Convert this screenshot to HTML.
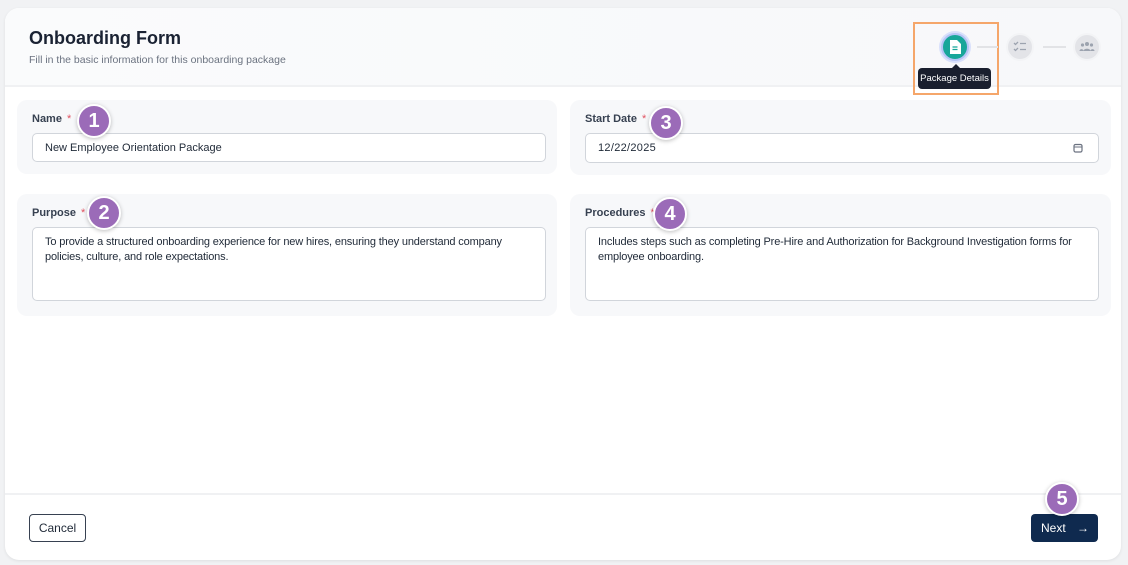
<!DOCTYPE html>
<html><head><style>
*{box-sizing:border-box;margin:0;padding:0}
body{width:1128px;height:565px;background:#f1f2f4;font-family:"Liberation Sans",sans-serif;position:relative;overflow:hidden;color:#1f2937}
.card{position:absolute;left:5px;top:8px;width:1116px;height:552px;background:#fff;border-radius:14px;box-shadow:0 1px 3px rgba(0,0,0,.08);overflow:hidden}
.hdr{position:absolute;left:0;top:0;width:100%;height:79px;background:linear-gradient(90deg,#fafbfc,#f7f8fa);border-bottom:2px solid #f0f1f3}
.a{position:absolute}
h1{position:absolute;left:24px;top:20px;font-size:18px;font-weight:bold;color:#1a2233}
.sub{left:24px;top:46px;font-size:10.5px;color:#6b7280}
.sec{position:absolute;background:#f7f8fa;border-radius:10px}
.lbl{position:absolute;font-size:11px;font-weight:bold;color:#374151}
.lbl span{color:#e05260;margin-left:5px;font-weight:normal}
.inp{position:absolute;background:#fff;border:1px solid #d1d5db;border-radius:5px;font-size:11px;color:#1f2937;padding:1px 12px 0;line-height:27px}
.ta{line-height:15px;padding:7px 12px;letter-spacing:-0.15px}
.badge{position:absolute;width:34px;height:34px;border-radius:50%;background:#9b6bb8;border:2px solid #fff;box-shadow:0 1px 4px rgba(0,0,0,.25);color:#fff;font-weight:bold;font-size:20px;text-align:center;line-height:30px}
.step{position:absolute;width:28px;height:28px;border-radius:50%;background:#e3e4e8;border:2px solid #f3f4f6}
.line{position:absolute;height:2px;background:#e2e3e6}
</style></head><body>
<div class="card">
<div class="hdr"></div>
<h1>Onboarding Form</h1>
<div class="a sub">Fill in the basic information for this onboarding package</div>
<div class="a" style="left:908px;top:14px;width:86px;height:73px;border:2px solid #f5a66a"></div>
<div class="step" style="left:936px;top:25px;background:#17a69a;border:2px solid #b6c5f5;box-shadow:0 0 0 2px #d9e0fb"></div>
<svg class="a" style="left:944px;top:32px" width="12" height="14" viewBox="0 0 12 14"><path d="M1 0h7l4 4v10H1z" fill="#fff"/><path d="M3.5 7h5M3.5 9.5h5" stroke="#17a69a" stroke-width="1.3"/></svg>
<div class="line" style="left:972px;width:21px;top:38px"></div>
<div class="step" style="left:1001px;top:25px"></div>
<svg class="a" style="left:1008px;top:33px" width="14" height="11" viewBox="0 0 14 11"><path d="M1 2l1.5 1.5L5 1M1 8l1.5 1.5L5 7M7 2.5h6M7 8.5h6" stroke="#9ca3af" stroke-width="1.3" fill="none"/></svg>
<div class="line" style="left:1038px;width:23px;top:38px"></div>
<div class="step" style="left:1068px;top:25px"></div>
<svg class="a" style="left:1074px;top:33px" width="16" height="10" viewBox="0 0 16 10"><circle cx="8" cy="3" r="2" fill="#9ca3af"/><circle cx="3.5" cy="4" r="1.6" fill="#9ca3af"/><circle cx="12.5" cy="4" r="1.6" fill="#9ca3af"/><path d="M4.5 10c0-3 7-3 7 0zM0.5 10c0-2.5 4-2.5 4 0zM11.5 10c0-2.5 4-2.5 4 0z" fill="#9ca3af"/></svg>
<div class="a" style="left:946px;top:51px;width:0;height:0;border:5px solid transparent;border-bottom-color:#1a1f2e"></div>
<div class="a" style="left:913px;top:60px;width:73px;height:21px;background:#1a1f2e;border-radius:4px;color:#fff;font-size:9.5px;text-align:center;line-height:21px">Package Details</div>

<div class="sec" style="left:12px;top:92px;width:540px;height:74px"></div>
<div class="sec" style="left:565px;top:92px;width:541px;height:75px"></div>
<div class="sec" style="left:12px;top:186px;width:540px;height:122px"></div>
<div class="sec" style="left:565px;top:186px;width:541px;height:122px"></div>

<div class="lbl" style="left:27px;top:105px">Name<span>*</span></div>
<div class="inp" style="left:27px;top:125px;width:514px;height:29px">New Employee Orientation Package</div>
<div class="lbl" style="left:580px;top:105px">Start Date<span>*</span></div>
<div class="inp" style="left:580px;top:125px;width:514px;height:30px;letter-spacing:.3px">12/22/2025</div>
<svg class="a" style="left:1068px;top:135px" width="10" height="10" viewBox="0 0 10 10"><rect x="1" y="1.5" width="8" height="7.5" rx="1.5" fill="none" stroke="#6b7280" stroke-width="1.2"/><path d="M1 4h8" stroke="#6b7280"/></svg>
<div class="lbl" style="left:27px;top:199px">Purpose<span>*</span></div>
<div class="inp ta" style="left:27px;top:219px;width:514px;height:74px">To provide a structured onboarding experience for new hires, ensuring they understand company policies, culture, and role expectations.</div>
<div class="lbl" style="left:580px;top:199px">Procedures<span>*</span></div>
<div class="inp ta" style="left:580px;top:219px;width:514px;height:74px">Includes steps such as completing Pre-Hire and Authorization for Background Investigation forms for employee onboarding.</div>

<div class="badge" style="left:72px;top:96px">1</div>
<div class="badge" style="left:644px;top:98px">3</div>
<div class="badge" style="left:82px;top:188px">2</div>
<div class="badge" style="left:648px;top:189px">4</div>

<div class="a" style="left:0;top:485px;width:100%;height:2px;background:#f0f1f3"></div>
<div class="a" style="left:24px;top:506px;width:57px;height:28px;border:1px solid #374151;border-radius:4px;font-size:12px;text-align:center;line-height:26px;color:#1f2937">Cancel</div>
<div class="a" style="left:1026px;top:506px;width:67px;height:28px;background:#0f2a4f;border-radius:4px;font-size:12px;color:#fff;line-height:28px;padding-left:10px;white-space:nowrap">Next<span style="position:absolute;left:46px;top:0">→</span></div>
<div class="badge" style="left:1040px;top:474px">5</div>
</div>
</body></html>
